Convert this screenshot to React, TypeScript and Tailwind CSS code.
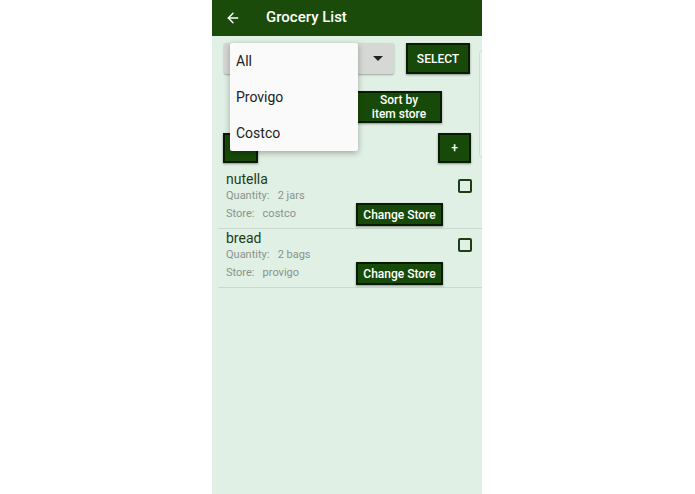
import { ArrowLeft } from 'lucide-react';

const items = [
  { name: 'nutella', quantity: '2 jars', store: 'costco' },
  { name: 'bread', quantity: '2 bags', store: 'provigo' },
];

const GreenButton = ({ children, className }: { children: React.ReactNode; className: string }) => (
  <div
    className={`flex items-center justify-center bg-[#174a08] border-2 border-[#0a1a05] text-white text-[12px] font-medium leading-[14px] text-center shadow-[0_1px_2px_rgba(0,0,0,0.4)] ${className}`}
  >
    {children}
  </div>
);

const App = () => {
  return (
    <div className="w-full h-[494px] bg-white flex pl-[212px]" style={{ fontFamily: 'Roboto, "Noto Sans", sans-serif' }}>
      <div className="relative w-[270px] h-full bg-[#e0f0e4] overflow-hidden flex flex-col">
        {/* toolbar */}
        <div className="h-[36px] shrink-0 bg-[#1a4b0a] flex items-center pl-[13px] pb-[1px]">
          <ArrowLeft className="w-[16px] h-[16px] text-white" strokeWidth={2.2} />
          <span className="ml-[25px] text-white text-[15px] font-medium">Grocery List</span>
        </div>

        {/* store picker row */}
        <div className="mt-[7px] flex pl-[12px] gap-[12px]">
          <div className="relative w-[170px] h-[31px] bg-[#d6d8d6] rounded-[2px] shadow-[0_1px_2px_rgba(0,0,0,0.3)] flex items-center justify-end pr-[11px]">
            <div className="w-0 h-0 border-l-[5px] border-r-[5px] border-t-[5px] border-l-transparent border-r-transparent border-t-[#222]" />
          </div>
          <GreenButton className="w-[64px] h-[31px]">SELECT</GreenButton>
        </div>

        {/* sort row */}
        <div className="mt-[17px] pl-[144px]">
          <GreenButton className="w-[86px] h-[32px]">
            Sort by
            <br />
            item store
          </GreenButton>
        </div>

        {/* actions row */}
        <div className="mt-[10px] flex pl-[11px]">
          <GreenButton className="w-[35px] h-[30px]">-</GreenButton>
          <GreenButton className="ml-[180px] w-[33px] h-[30px]">+</GreenButton>
        </div>

        {/* list */}
        <div className="mt-[7px] ml-[6px]">
          {items.map((item) => (
            <div key={item.name} className="flex border-b border-[#cbd9ce] pl-[8px] pb-[2px]">
              <div className="flex-1 flex flex-col">
                <div className="h-[18px] leading-[18px] text-[14px] text-[#1f3d14]">{item.name}</div>
                <div className="h-[15px] leading-[15px] text-[11px] text-[#8a938b]">
                  Quantity:&nbsp;&nbsp; {item.quantity}
                </div>
                <div className="flex items-center h-[23px]">
                  <span className="text-[11px] text-[#8a938b]">Store:&nbsp;&nbsp; {item.store}</span>
                  <GreenButton className="ml-auto w-[87px] h-[23px]">Change Store</GreenButton>
                </div>
              </div>
              <div className="ml-[15px] mr-[10px] pt-[9px]">
                <div className="w-[14px] h-[14px] border-2 border-[#1f3d14] rounded-[2px]" />
              </div>
            </div>
          ))}
        </div>

        {/* partially visible panel at right edge */}
        <div className="absolute left-[267px] top-[50px] w-[20px] h-[108px] rounded-[4px] border border-[#cfdcd2] bg-[#e6f3e9]" />

        {/* open dropdown */}
        <div className="absolute left-[18px] top-[43px] w-[128px] bg-[#fafafa] rounded-[2px] shadow-[0_2px_6px_rgba(0,0,0,0.3)] flex flex-col">
          {['All', 'Provigo', 'Costco'].map((s) => (
            <div key={s} className="h-[36px] flex items-center pl-[6px] text-[14px] text-[#212121]">
              {s}
            </div>
          ))}
        </div>
      </div>
    </div>
  );
};

export default App;
